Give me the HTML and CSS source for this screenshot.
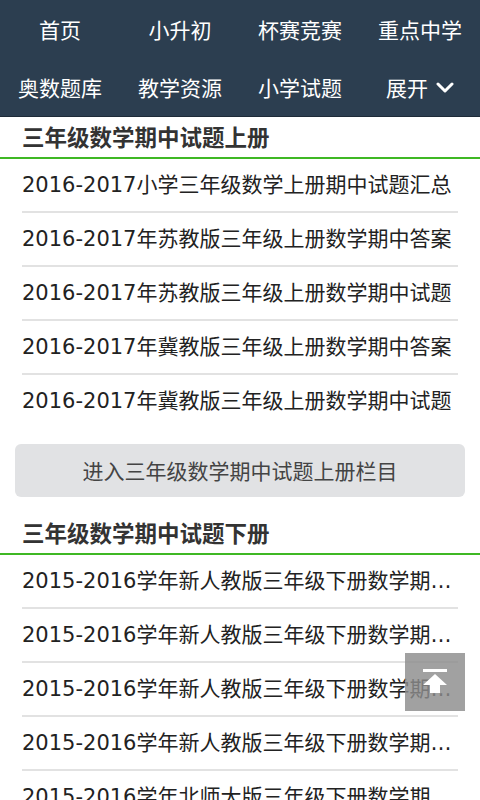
FILE: index.html
```html
<!DOCTYPE html>
<html lang="zh-CN">
<head>
<meta charset="utf-8">
<title>三年级数学期中试题</title>
<link rel="stylesheet" href="styles.css">
</head>
<body>
<nav class="topnav">
  <a class="nav-item" href="#">首页</a>
  <a class="nav-item" href="#">小升初</a>
  <a class="nav-item" href="#">杯赛竞赛</a>
  <a class="nav-item" href="#">重点中学</a>
  <a class="nav-item" href="#">奥数题库</a>
  <a class="nav-item" href="#">教学资源</a>
  <a class="nav-item" href="#">小学试题</a>
  <a class="nav-item nav-more" href="#">展开<svg class="chev" width="18" height="12" viewBox="0 0 18 12"><polyline points="2,2 9,9 16,2" fill="none" stroke="#fff" stroke-width="3" stroke-linecap="round" stroke-linejoin="round"/></svg></a>
</nav>

<section class="sec">
  <h2 class="sec-title">三年级数学期中试题上册</h2>
  <ul class="list">
    <li><a href="#">2016-2017小学三年级数学上册期中试题汇总</a></li>
    <li><a href="#">2016-2017年苏教版三年级上册数学期中答案</a></li>
    <li><a href="#">2016-2017年苏教版三年级上册数学期中试题</a></li>
    <li><a href="#">2016-2017年冀教版三年级上册数学期中答案</a></li>
    <li><a href="#">2016-2017年冀教版三年级上册数学期中试题</a></li>
  </ul>
  <a class="more" href="#">进入三年级数学期中试题上册栏目</a>
</section>

<section class="sec sec-next">
  <h2 class="sec-title">三年级数学期中试题下册</h2>
  <ul class="list">
    <li><a href="#">2015-2016学年新人教版三年级下册数学期中试卷</a></li>
    <li><a href="#">2015-2016学年新人教版三年级下册数学期中测试</a></li>
    <li><a href="#">2015-2016学年新人教版三年级下册数学期中检测</a></li>
    <li><a href="#">2015-2016学年新人教版三年级下册数学期中答案</a></li>
    <li><a href="#">2015-2016学年北师大版三年级下册数学期中试卷</a></li>
  </ul>
</section>

<a class="to-top" href="#"><svg width="60" height="58" viewBox="0 0 60 58"><rect x="18" y="16" width="24" height="3" fill="#fff"/><path d="M30 21 L42 32 L35 32 L35 40 L25 40 L25 32 L18 32 Z" fill="#fff"/></svg></a>
</body>
</html>
```

FILE: styles.css
```css
* { box-sizing: border-box; }

body {
  margin: 0;
  background: #fff;
  font-family: "Noto Sans CJK SC", sans-serif;
  color: #222;
}

a { text-decoration: none; color: inherit; }

.topnav {
  display: grid;
  grid-template-columns: repeat(4, 1fr);
  grid-auto-rows: 58px;
  background: #2c3e50;
  border-bottom: 1px solid #1e2b38;
}

.nav-item {
  display: flex;
  align-items: center;
  justify-content: center;
  color: #fff;
  font-size: 21px;
  line-height: 1;
}

.chev { margin-left: 8px; margin-top: 2px; }

.sec-title {
  margin: 0;
  padding-left: 22px;
  height: 40px;
  line-height: 38px;
  font-size: 22.5px;
  font-weight: 700;
  color: #333;
  border-bottom: 2px solid #3fb824;
  box-sizing: content-box;
}

.list {
  list-style: none;
  margin: 0 22px;
  padding: 0;
}

.list li {
  height: 54px;
  border-bottom: 2px solid #e2e2e2;
  font-family: "DejaVu Sans", "Noto Sans CJK SC", sans-serif;
  font-size: 21px;
  line-height: 52px;
  white-space: nowrap;
  overflow: hidden;
  text-overflow: ellipsis;
  color: #222;
}

.list li:last-child { border-bottom: none; height: 52px; }

.more {
  display: block;
  margin: 17px 15px 0;
  height: 53px;
  line-height: 53px;
  text-align: center;
  background: #e1e2e4;
  border-radius: 6px;
  font-size: 21px;
  color: #444;
}

.sec-next { margin-top: 16px; }

.to-top {
  position: fixed;
  right: 15px;
  bottom: 89px;
  width: 60px;
  height: 58px;
  background: rgba(140, 140, 140, 0.82);
  display: block;
}

.to-top svg { display: block; }
```
